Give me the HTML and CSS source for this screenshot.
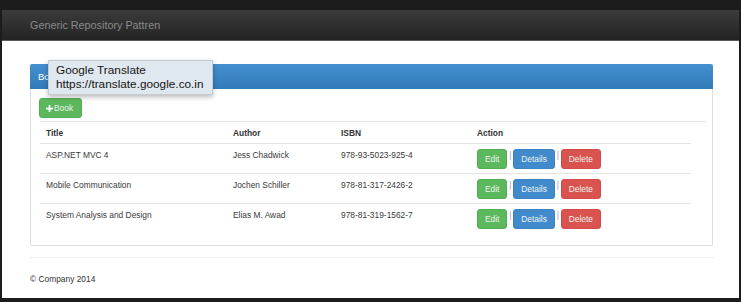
FILE: index.html
```html
<!DOCTYPE html>
<html lang="en">
<head>
<meta charset="utf-8">
<title>Generic Repository Pattren</title>
<link rel="stylesheet" href="styles.css">
</head>
<body>
<div class="window">
  <div class="navbar">
    <span class="brand">Generic Repository Pattren</span>
  </div>
  <div class="container">
    <div class="panel">
      <div class="panel-heading">Books</div>
      <div class="panel-body">
        <a class="btn btn-success btn-add"><svg class="plus" viewBox="0 0 8 8" width="7" height="7"><path d="M3 0h2v3h3v2H5v3H3V5H0V3h3z" fill="#fff"/></svg>Book</a>
        <table class="table">
          <tr class="head">
            <th class="c1">Title</th>
            <th class="c2">Author</th>
            <th class="c3">ISBN</th>
            <th class="c4">Action</th>
            <th class="c5"></th>
          </tr>
          <tr>
            <td>ASP.NET MVC 4</td>
            <td>Jess Chadwick</td>
            <td>978-93-5023-925-4</td>
            <td><a class="btn btn-success">Edit</a> <span class="sep">|</span> <a class="btn btn-primary">Details</a> <span class="sep">|</span> <a class="btn btn-danger">Delete</a></td>
          </tr>
          <tr>
            <td>Mobile Communication</td>
            <td>Jochen Schiller</td>
            <td>978-81-317-2426-2</td>
            <td><a class="btn btn-success">Edit</a> <span class="sep">|</span> <a class="btn btn-primary">Details</a> <span class="sep">|</span> <a class="btn btn-danger">Delete</a></td>
          </tr>
          <tr>
            <td>System Analysis and Design</td>
            <td>Elias M. Awad</td>
            <td>978-81-319-1562-7</td>
            <td><a class="btn btn-success">Edit</a> <span class="sep">|</span> <a class="btn btn-primary">Details</a> <span class="sep">|</span> <a class="btn btn-danger">Delete</a></td>
          </tr>
        </table>
      </div>
    </div>
    <hr class="rule">
    <footer class="footer">© Company 2014</footer>
  </div>
  <div class="tooltip">
    <div>Google Translate</div>
    <div>https://translate.google.co.in</div>
  </div>
</div>
</body>
</html>
```

FILE: styles.css
```css
html, body {
  margin: 0;
  padding: 0;
}
body {
  background: #1c1c1c;
  font-family: "Liberation Sans", Arial, sans-serif;
  font-size: 8.4px;
  line-height: 12px;
  color: #3a3a3a;
}
.window {
  position: relative;
  margin: 10px 2px 0 2px;
  height: 288px;
  background: #fff;
  overflow: hidden;
}
.navbar {
  height: 30px;
  background: linear-gradient(to bottom, #3b3b3b 0%, #242424 100%);
  border-bottom: 1px solid #5a5a5a;
  display: flex;
  align-items: center;
  padding-left: 28px;
}
.brand {
  font-size: 10.8px;
  color: #8a8a8a;
}
.container {
  padding: 23px 26px 0 28px;
}
.panel {
  border: 1px solid #dedede;
  border-top: 0;
  border-radius: 2px;
}
.panel-heading {
  height: 25px;
  line-height: 25px;
  margin: 0 -1px;
  padding: 0 8px;
  background: linear-gradient(to bottom, #4590d0 0%, #337ab9 100%);
  border-radius: 2px 2px 0 0;
  color: #fff;
  font-size: 9.5px;
}
.panel-body {
  padding: 9px 8px 0 9px;
}
.btn {
  display: inline-block;
  box-sizing: border-box;
  height: 20px;
  line-height: 18px;
  padding: 0 7px;
  border: 1px solid transparent;
  border-radius: 3px;
  color: #eef2ee;
  font-size: 8.4px;
  vertical-align: top;
  text-decoration: none;
}
.btn-success {
  background: #5cb85c;
  border-color: #52b052;
}
.btn-primary {
  background: #418bcc;
  border-color: #3a82c2;
  padding: 0 7px;
}
.btn-danger {
  background: #d9534f;
  border-color: #d34a46;
}
.btn-add {
  padding: 0 7px 0 6px;
  margin-left: -1px;
  margin-bottom: 3px;
  display: flex;
  align-items: center;
  width: 43px;
}
.plus {
  margin-right: 1px;
}
.table {
  width: calc(100% + 2px);
  border-collapse: collapse;
  margin-bottom: 12px;
}
.table th,
.table td {
  text-align: left;
  vertical-align: top;
  padding: 5px 5px 4px 6px;
  border-top: 1px solid #e4e4e4;
}
.table th {
  font-weight: bold;
  color: #333;
}
.table td {
  padding-bottom: 4px;
}
.c1 { width: 176px; }
.c2 { width: 97px; }
.c3 { width: 125px; }
.c5 { width: 4px; }
.sep {
  color: #9d97cc;
  margin: 0 -0.5px;
}
.rule {
  border: 0;
  border-top: 1px solid #eeeeee;
  margin: 11px -1px 0 -1px;
}
.footer {
  margin-top: 15px;
  color: #333;
}
.tooltip {
  position: absolute;
  left: 46px;
  top: 50px;
  width: 150px;
  padding: 2px 6px 3px 7px;
  background: #dfe8ef;
  border: 1px solid #c3ccd4;
  box-shadow: 0 2px 5px rgba(0, 0, 0, 0.28);
  font-size: 11.8px;
  line-height: 14px;
  color: #151515;
}
```
